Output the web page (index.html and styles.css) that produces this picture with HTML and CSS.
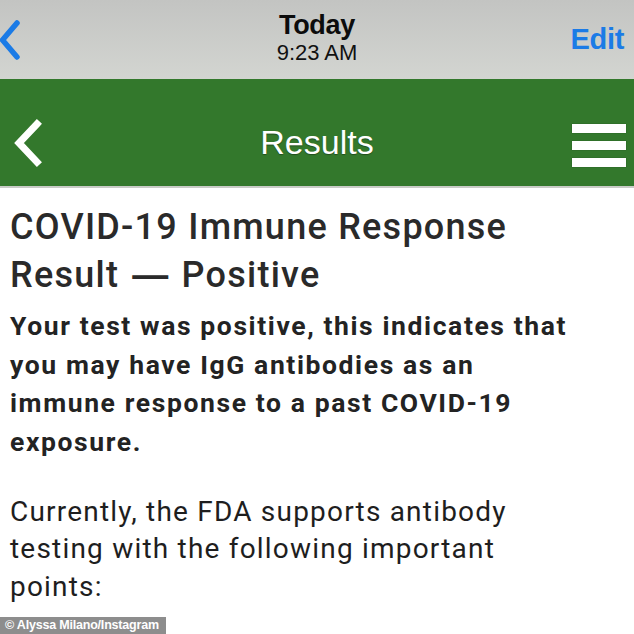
FILE: index.html
```html
<!DOCTYPE html>
<html lang="en">
<head>
<meta charset="utf-8">
<title>Results</title>
<link rel="stylesheet" href="styles.css">
</head>
<body>
<div class="screen">
  <header class="topbar">
    <div class="top-left">
      <svg class="blue-back" width="24" height="44" viewBox="0 0 24 44" aria-hidden="true">
        <polyline points="17,4 2.5,21 17,38" fill="none" stroke="#1b7be6" stroke-width="5.5" stroke-linecap="round" stroke-linejoin="round"/>
      </svg>
    </div>
    <div class="top-center">
      <div class="today">Today</div>
      <div class="time">9:23 AM</div>
    </div>
    <div class="top-right">
      <span class="edit">Edit</span>
    </div>
  </header>
  <nav class="navbar">
    <div class="nav-left">
      <svg class="white-back" width="34" height="48" viewBox="0 0 34 48" aria-hidden="true">
        <polyline points="25,5 7,24 25,43" fill="none" stroke="#ffffff" stroke-width="7" stroke-linecap="square" stroke-linejoin="miter"/>
      </svg>
    </div>
    <div class="nav-title">Results</div>
    <div class="nav-right">
      <div class="menu">
        <span class="bar"></span>
        <span class="bar"></span>
        <span class="bar"></span>
      </div>
    </div>
  </nav>
  <main class="content">
    <h1 class="title">COVID-19 Immune Response<br>Result <span class="dash">—</span> Positive</h1>
    <p class="lead">Your test was positive, this indicates that<br>you may have IgG antibodies as an<br>immune response to a past COVID-19<br>exposure.</p>
    <p class="body">Currently, the FDA supports antibody<br>testing with the following important<br>points:</p>
  </main>
  <div class="credit">© Alyssa Milano/Instagram</div>
</div>
</body>
</html>
```
FILE: styles.css
```css
html, body {
  margin: 0;
  padding: 0;
  background: #ffffff;
}
.screen {
  position: relative;
  width: 634px;
  height: 634px;
  overflow: hidden;
  font-family: Roboto, "Liberation Sans", Arial, sans-serif;
}
.topbar {
  height: 79px;
  display: grid;
  grid-template-columns: 1fr auto 1fr;
  align-items: center;
  background: linear-gradient(#c3c4c2, #d3d5d1);
}
.top-left {
  display: flex;
  align-items: center;
  padding-top: 2px;
}
.blue-back {
  display: block;
}
.top-center {
  display: flex;
  flex-direction: column;
  align-items: center;
  padding-bottom: 4px;
}
.today {
  font-family: "Liberation Sans", Arial, sans-serif;
  font-weight: 700;
  font-size: 27px;
  line-height: 30px;
  color: #0c0c0c;
  letter-spacing: -0.3px;
}
.time {
  font-family: "Liberation Sans", Arial, sans-serif;
  font-size: 22px;
  line-height: 26px;
  color: #111111;
}
.top-right {
  display: flex;
  justify-content: flex-end;
  padding-right: 10px;
}
.edit {
  font-family: "Liberation Sans", Arial, sans-serif;
  font-weight: 700;
  font-size: 29px;
  color: #1b7be6;
  letter-spacing: -0.3px;
}
.navbar {
  box-sizing: border-box;
  height: 109px;
  padding-top: 20px;
  display: grid;
  grid-template-columns: 1fr auto 1fr;
  align-items: center;
  background: #33782c;
  border-bottom: 2px solid #c9cbc7;
}
.nav-left {
  display: flex;
  padding-left: 12px;
}
.white-back {
  display: block;
}
.nav-title {
  font-family: "Liberation Sans", Arial, sans-serif;
  font-size: 34px;
  color: #ffffff;
  text-shadow: 0 1px 1px rgba(0, 0, 0, 0.35);
}
.nav-right {
  display: flex;
  justify-content: flex-end;
  padding-right: 8px;
  margin-top: 6px;
}
.menu {
  display: flex;
  flex-direction: column;
  gap: 8.5px;
  width: 54px;
}
.bar {
  display: block;
  height: 8.5px;
  background: #ffffff;
  box-shadow: 0 0 1px rgba(0, 0, 0, 0.4);
}
.content {
  padding: 0 10px;
}
.title {
  margin: 15px 0 0;
  font-size: 36px;
  line-height: 48px;
  font-weight: 500;
  color: #2a2a2a;
  letter-spacing: 1.25px;
  white-space: nowrap;
}
.dash {
  font-family: "Liberation Sans", Arial, sans-serif;
  font-weight: 700;
  letter-spacing: 0;
  margin: 0 3px;
}
.lead {
  margin: 8px 0 0;
  font-size: 26.5px;
  line-height: 38.7px;
  font-weight: 700;
  color: #232323;
  letter-spacing: 1.6px;
  white-space: nowrap;
}
.body {
  margin: 31px 0 0;
  font-size: 28px;
  line-height: 37.5px;
  font-weight: 400;
  color: #1e1e1e;
  letter-spacing: 1.2px;
  white-space: nowrap;
}
.credit {
  position: absolute;
  left: 0;
  bottom: 0;
  width: 161px;
  height: 17px;
  padding-left: 5px;
  background: #8d8d8d;
  color: #ffffff;
  font-family: "Liberation Sans", Arial, sans-serif;
  font-weight: 700;
  font-size: 12.5px;
  line-height: 17px;
  letter-spacing: -0.2px;
  white-space: nowrap;
}
```
